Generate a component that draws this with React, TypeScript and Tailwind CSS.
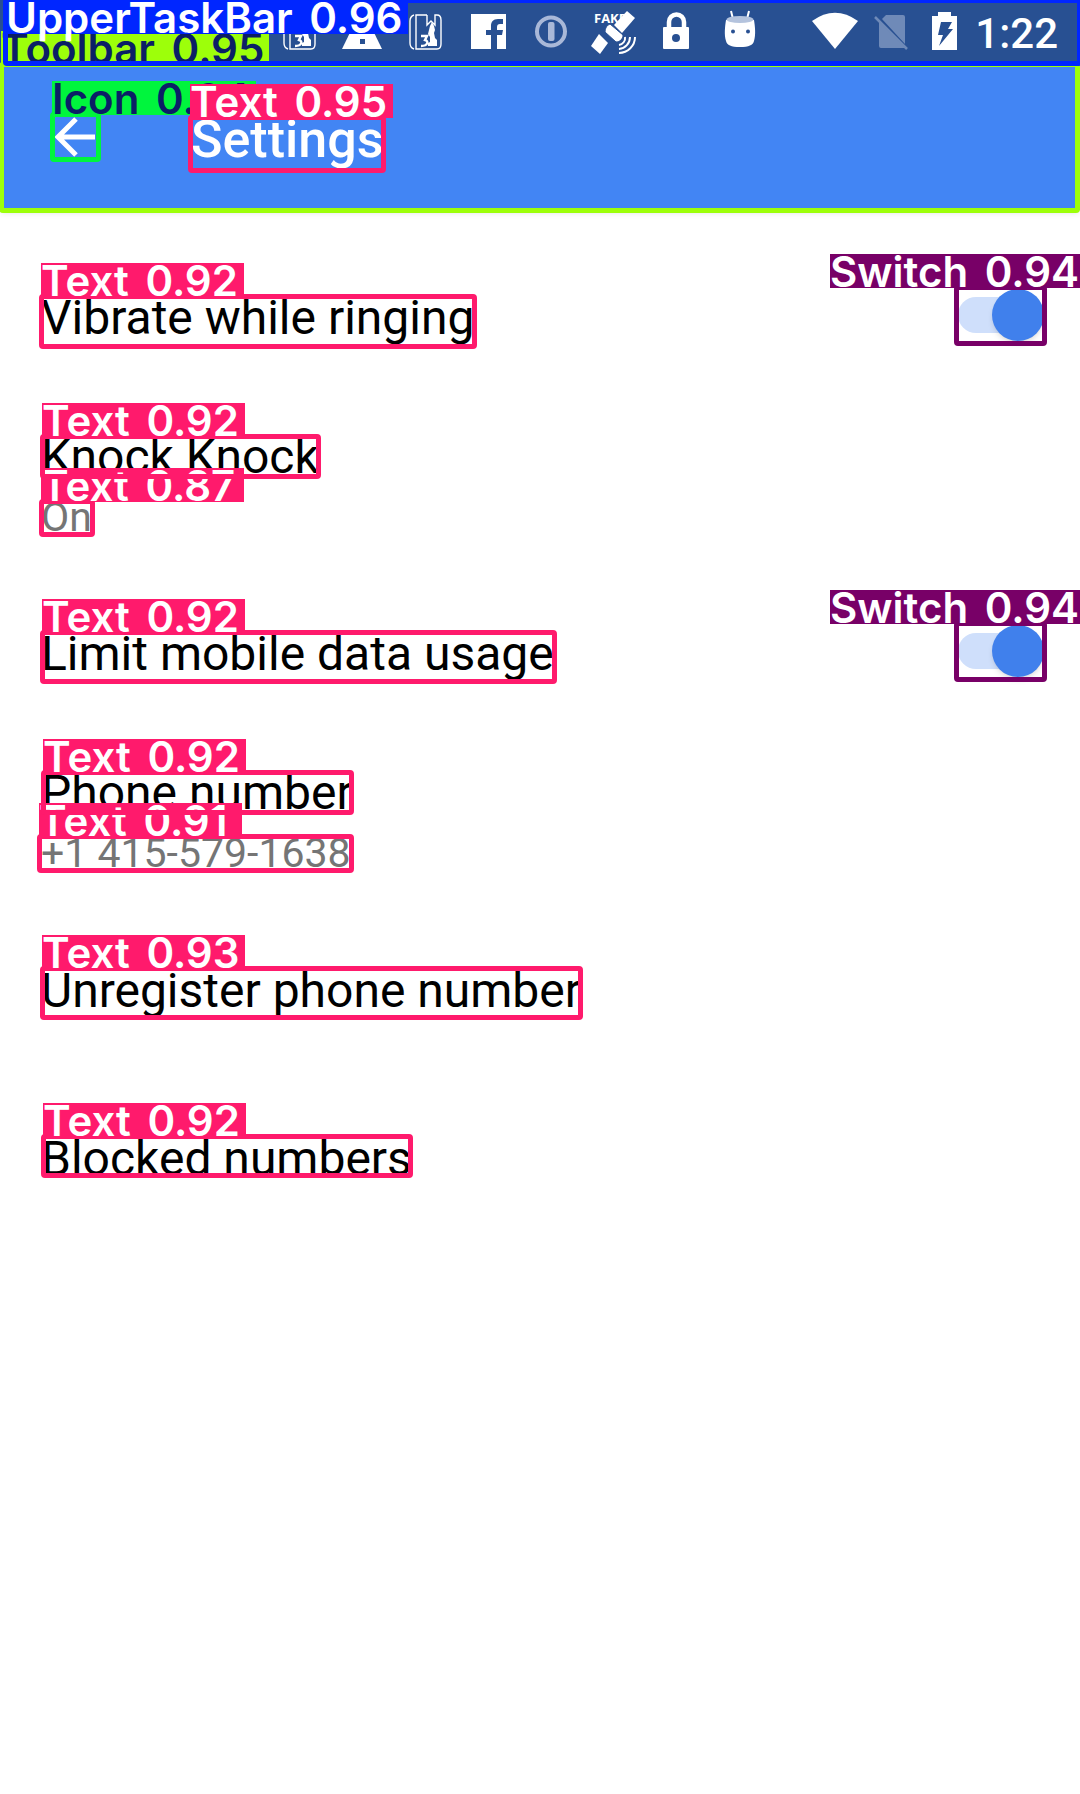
import type { ReactNode } from "react";

type Annotation = {
  name: string;
  score: string;
  kind: "text" | "switch" | "icon" | "toolbar" | "taskbar";
  left?: number;
  right?: number;
  top: number;
  width?: number;
  height: number;
};

const tones = {
  text: { border: "border-[#ff1a6c]", fill: "bg-[#ff1a6c] text-white w-[203px]" },
  switch: { border: "border-[#780067]", fill: "bg-[#780067] text-white w-[250px]" },
  icon: { border: "border-[#00f53d]", fill: "bg-[#00f53d] text-[#0b1f66] w-[204px]" },
  toolbar: { border: "border-[#9dff0a]", fill: "bg-[#9dff0a] text-[#0b1f66] w-[268px]" },
  taskbar: { border: "border-[#0026ff]", fill: "bg-[#0026ff] text-white w-[402px]" },
};

// Listed in paint order: later entries lie over earlier ones.
const annotations: Annotation[] = [
  { name: "Text", score: "0.87", kind: "text", left: 39, top: 499, width: 56, height: 38 },
  { name: "Text", score: "0.91", kind: "text", left: 37, top: 834, width: 317, height: 39 },
  { name: "Text", score: "0.92", kind: "text", left: 39, top: 294, width: 438, height: 55 },
  { name: "Text", score: "0.92", kind: "text", left: 40, top: 434, width: 281, height: 45 },
  { name: "Text", score: "0.92", kind: "text", left: 40, top: 630, width: 517, height: 54 },
  { name: "Text", score: "0.92", kind: "text", left: 41, top: 770, width: 313, height: 45 },
  { name: "Text", score: "0.93", kind: "text", left: 40, top: 966, width: 543, height: 54 },
  { name: "Text", score: "0.92", kind: "text", left: 41, top: 1134, width: 372, height: 44 },
  { name: "Switch", score: "0.94", kind: "switch", right: 33, top: 285, width: 93, height: 61 },
  { name: "Switch", score: "0.94", kind: "switch", right: 33, top: 621, width: 93, height: 61 },
  { name: "Toolbar", score: "0.95", kind: "toolbar", left: -1, right: 0, top: 62, height: 151 },
  { name: "Icon", score: "0.94", kind: "icon", left: 50, top: 112, width: 51, height: 50 },
  { name: "Text", score: "0.95", kind: "text", left: 188, top: 115, width: 198, height: 58 },
  { name: "UpperTaskBar", score: "0.96", kind: "taskbar", left: 3, right: -2, top: -2, height: 68 },
];

function AnnotationBox({ item }: { item: Annotation }) {
  const tone = tones[item.kind];
  const { left, right, top, width, height } = item;
  const place =
    item.kind === "taskbar"
      ? "top-[-3px] left-[-2px]"
      : item.kind === "switch"
        ? "bottom-full right-[-38px] mb-[2px]"
        : "bottom-full left-[-3px] mb-[2px]";
  return (
    <div
      className={`absolute rounded-[4px] border-[5px] ${tone.border}`}
      style={{ left, right, top, width, height }}
    >
      <span
        className={`absolute h-[34px] text-[42px] leading-[36px] font-semibold whitespace-nowrap ${place} ${tone.fill}`}
      >
        {item.name} <span className="ml-1.5">{item.score}</span>
      </span>
    </div>
  );
}

function StatusIcon({ children, narrow }: { children: ReactNode; narrow?: boolean }) {
  return narrow ? (
    <svg viewBox="0 0 56 63" className="h-[63px] w-14 shrink-0" fill="white" aria-hidden="true">
      {children}
    </svg>
  ) : (
    <svg viewBox="0 0 63 63" className="h-[63px] w-[63px] shrink-0" fill="white" aria-hidden="true">
      {children}
    </svg>
  );
}

function CardIcon() {
  return (
    <StatusIcon>
      <g fill="none" stroke="white" strokeWidth="1.4">
        <path d="M20 15c-3 1-4 3-4 6v22c0 3 1 5 4 6" />
        <path d="M33 15H22v34h21c3 0 4-2 4-5V20c0-3-1-5-4-5h-2v10l-4-4-4 4V15" />
      </g>
      <path d="M36 26l2-4 2 4 1 4-1 3 1 5 2 2v6h-9v-3l2-1v-5l-2-3z" />
      <path d="M27 36h6l-2 4c4 1 3 6-4 6" fill="none" stroke="white" strokeWidth="2.4" />
    </StatusIcon>
  );
}

function StatusBar() {
  return (
    <div className="flex h-[63px] items-center bg-[#285092] pr-[22px] pl-[268px]">
      <CardIcon />
      <StatusIcon>
        <path d="M31 8L51 49H11z" />
        <path d="M29 39h5v5h-5z" fill="#285092" />
      </StatusIcon>
      <CardIcon />
      <StatusIcon>
        <path d="M14 14h35v35h-9V35h5l1-5h-6v-3c0-2 1-3 3-3h3v-5h-5c-5 0-7 3-7 7v4h-5v5h5v14H14z" />
      </StatusIcon>
      <StatusIcon>
        <g fill="#a9b8d8">
          <circle cx="31" cy="31.5" r="14" fill="none" stroke="#a9b8d8" strokeWidth="4" />
          <rect x="28" y="22" width="6.5" height="19" rx="2" />
        </g>
      </StatusIcon>
      <StatusIcon>
        <text x="11" y="23" fontSize="13" fontWeight="700" fontFamily="Open Sans, sans-serif">
          FAKE
        </text>
        <path d="M44 11l8 7-13 15-8-8z" />
        <path d="M16 34l9 9-8 11-9-8z" />
        <path
          d="M27 24l13 11c0 4-3 7-7 7L22 32c0-4 2-7 5-8z"
          stroke="#285092"
          strokeWidth="1"
        />
        <path
          d="M42 37a7 7 0 0 1-6 8M47 37a12 12 0 0 1-11 12M52 37a16 16 0 0 1-16 16"
          fill="none"
          stroke="white"
          strokeWidth="2"
        />
      </StatusIcon>
      <StatusIcon>
        <path d="M23 28v-6a7.500 7.500 0 0 1 15 0v6" fill="none" stroke="white" strokeWidth="4.500" />
        <rect x="17" y="27" width="26" height="22" rx="1" />
        <circle cx="30" cy="38" r="4" fill="#285092" />
      </StatusIcon>
      <StatusIcon>
        <path d="M22 11l2 8M40 11l-2 8" stroke="white" strokeWidth="2" />
        <path d="M17 20h28c1 6 2 15 0 21-1 4-5 6-14 6s-13-2-14-6c-2-6-1-15 0-21z" />
        <ellipse cx="31" cy="19.500" rx="13.500" ry="3.500" fill="#b4c3dd" />
        <circle cx="24" cy="31.500" r="2" fill="#285092" />
        <circle cx="39" cy="31.500" r="2" fill="#285092" />
      </StatusIcon>
      <div className="ml-auto flex items-center">
        <StatusIcon narrow>
          <path d="M5 21Q28 4.500 51 21L28 49z" />
        </StatusIcon>
        <StatusIcon narrow>
          <path
            d="M23 15h17a2 2 0 0 1 2 2v27L19 19zM16 22l26 26H18a2 2 0 0 1-2-2z"
            fill="#6f8ab8"
          />
          <path d="M12 17l32 32" stroke="#6f8ab8" strokeWidth="2.500" />
        </StatusIcon>
        <StatusIcon narrow>
          <path d="M19 12h13v4h6v34H13V16h6z" />
          <path d="M22 22h11l-4 7h5L20 46l4-11h-5z" fill="#285092" />
        </StatusIcon>
        <span className="pt-1 text-[42px] leading-[60px] font-medium text-white">1:22</span>
      </div>
    </div>
  );
}

function Toolbar() {
  return (
    <header className="flex h-[147px] items-center gap-[95px] bg-[#4285f4] pl-[54px] text-white shadow-md">
      <button type="button" aria-label="Back">
        <svg viewBox="0 0 42 42" className="size-[42px]" fill="none" stroke="white" strokeWidth="5">
          <path d="M41 21H5M22 3L4 21l18 18" />
        </svg>
      </button>
      <h1 className="pt-1.5 text-[52px] leading-[60px] font-medium">Settings</h1>
    </header>
  );
}

const settings = [
  { id: "vibrate", title: "Vibrate while ringing", toggle: true },
  { id: "knock", title: "Knock Knock", detail: "On" },
  { id: "limit", title: "Limit mobile data usage", toggle: true },
  { id: "phone", title: "Phone number", detail: "+1 415-579-1638" },
  { id: "unregister", title: "Unregister phone number" },
  { id: "blocked", title: "Blocked numbers" },
];

function Switch({ id }: { id: string }) {
  return (
    <span className="relative mb-1.5 flex h-[52px] w-[86px] items-center">
      <input
        id={id}
        type="checkbox"
        role="switch"
        defaultChecked
        className="peer h-9 w-full appearance-none rounded-full bg-gray-300 checked:bg-[#cfdffb]"
      />
      <span className="pointer-events-none absolute top-0 left-0 size-[52px] rounded-full bg-gray-100 shadow-md peer-checked:right-0 peer-checked:left-auto peer-checked:bg-[#4080ec]" />
    </span>
  );
}

export default function App() {
  return (
    <div className="relative min-h-screen overflow-hidden bg-white font-['Roboto',sans-serif]">
      <StatusBar />
      <Toolbar />
      <main className="pt-6">
        <ul>
          {settings.map((s) => (
            <li key={s.id} className="flex h-[168px] items-center justify-between pr-9 pl-[41px]">
              {s.toggle ? (
                <>
                  <label htmlFor={s.id} className="text-[48px] leading-[56px] text-black">
                    {s.title}
                  </label>
                  <Switch id={s.id} />
                </>
              ) : (
                <button type="button" className="flex flex-col gap-1 pt-0.5 text-left">
                  <span className="text-[48px] leading-[56px] text-black">{s.title}</span>
                  {s.detail && (
                    <span className="text-[41px] leading-[56px] text-[#757575]">{s.detail}</span>
                  )}
                </button>
              )}
            </li>
          ))}
        </ul>
      </main>
      <div className="pointer-events-none absolute inset-0 font-['Inter',sans-serif]">
        {annotations.map((item) => (
          <AnnotationBox key={`${item.kind}-${item.top}`} item={item} />
        ))}
      </div>
    </div>
  );
}
